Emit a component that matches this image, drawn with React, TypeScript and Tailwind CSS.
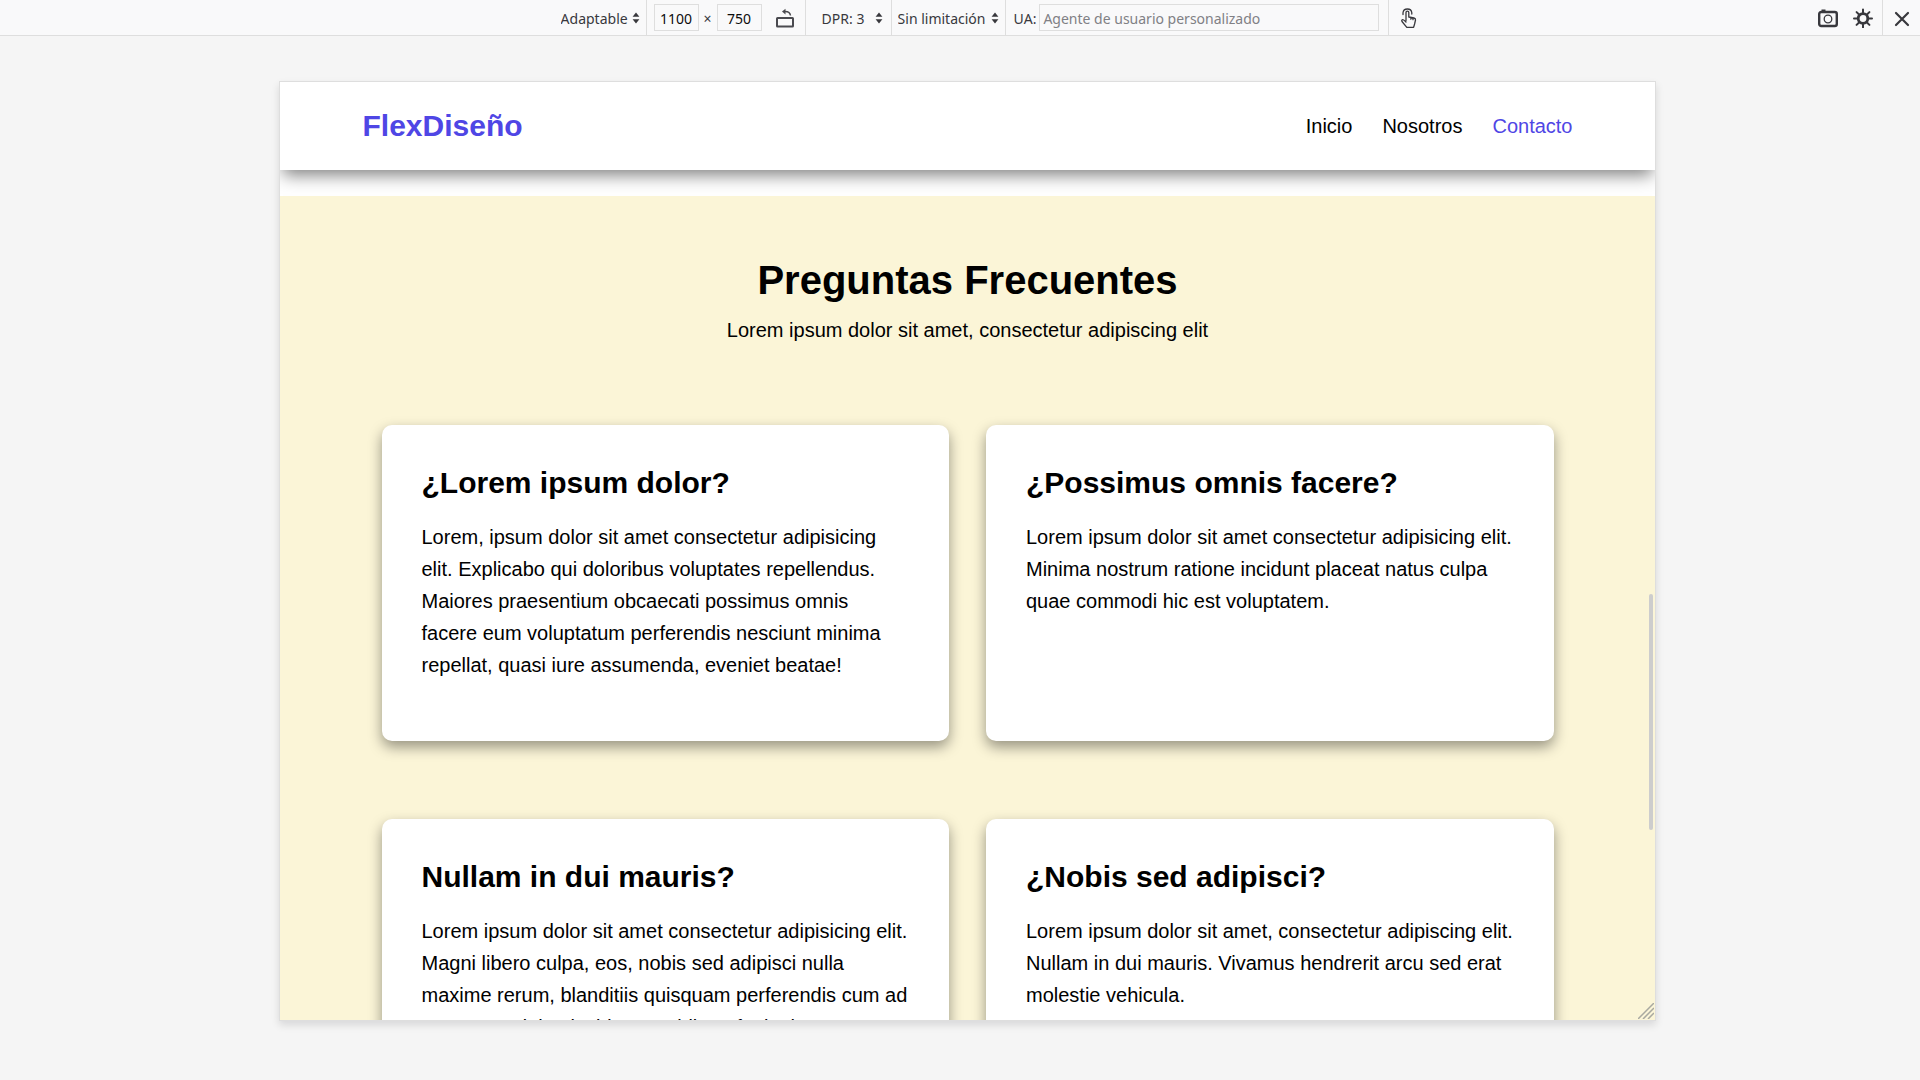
import React from "react";

function Arrows() {
  return (
    <svg viewBox="0 0 8 12" className="pointer-events-none h-3 w-2 shrink-0 fill-[#38383d]" aria-hidden="true">
      <path d="M4 0.5 7.4 4.8H0.6ZM4 11.5 7.4 7.2H0.6Z" />
    </svg>
  );
}

function Picker({ label, text, width }: { label: string; text: string; width: string }) {
  return (
    <div className="flex h-full items-center">
      <select aria-label={label} className={`appearance-none bg-transparent pt-0.5 outline-none ${width}`}>
        <option>{text}</option>
      </select>
      <Arrows />
    </div>
  );
}

function Toolbar() {
  return (
    <div
      className="grid h-9 shrink-0 grid-cols-[1fr_auto_1fr] border-b border-[#dedede] bg-[#f9f9fa] text-sm text-[#38383d]"
      style={{ fontFamily: '"Noto Sans", "Open Sans", sans-serif' }}
    >
      <div />
      <div className="flex items-center pl-[60px]">
        <div className="flex h-full items-center border-r border-[#dedede] pr-[6px]">
          <Picker label="Dispositivo" text="Adaptable" width="w-[71px]" />
        </div>
        <div className="flex h-full items-center border-r border-[#dedede] pr-[9px] pl-[7px]">
          <input aria-label="Ancho" defaultValue="1100" className="h-[27px] w-[45px] border border-[#dedede] pt-0.5 text-center text-[#0c0c0d]" />
          <span className="w-[18px] pt-0.5 text-center">×</span>
          <input aria-label="Alto" defaultValue="750" className="h-[27px] w-[45px] border border-[#dedede] pt-0.5 text-center text-[#0c0c0d]" />
          <button aria-label="Rotar" className="ml-3 flex size-[22px] items-center justify-center">
            <svg viewBox="0 0 20 20" className="size-5 fill-none stroke-[#4a4a4f]">
              <rect x="2" y="10" width="16" height="8.500" rx="0.500" strokeWidth="2" />
              <path d="M9.500 3.500q5.500-.3 6 4" strokeWidth="1.500" />
              <path d="M10.500.8v5.600L7 3.600Z" className="fill-[#4a4a4f]" stroke="none" />
            </svg>
          </button>
        </div>
        <div className="flex h-full items-center border-r border-[#dedede] pr-2 pl-4">
          <Picker label="Proporción de píxeles" text="DPR: 3" width="w-[53px]" />
        </div>
        <div className="flex h-full items-center border-r border-[#dedede] px-[6px]">
          <Picker label="Limitación de red" text="Sin limitación" width="w-[93px]" />
        </div>
        <label className="flex h-full items-center gap-[3px] border-r border-[#dedede] pr-[9px] pl-2">
          <span className="pt-0.5">UA:</span>
          <input placeholder="Agente de usuario personalizado" className="h-[27px] w-[340px] border border-[#dedede] px-[3px] pt-0.5 placeholder:text-[#808085]" />
        </label>
        <button aria-label="Simulación táctil" className="ml-2 flex size-[22px] items-center justify-center">
          <svg viewBox="0 0 20 20" className="size-5 fill-none stroke-[#38383d]" strokeWidth="1.300" strokeLinejoin="round" strokeLinecap="round">
            <path d="M8 12.500V4.600a1.400 1.400 0 0 1 2.800 0V9l5.200 1q1.700.4 1.500 2L16.600 16l-1 3.300H8.800L4 13.500q-.8-1.500.7-1.900Q5.500 11.400 8 14M12.800 9.500v1.700M15 10v1.700" />
            <path d="M5 6.500V4.800Q5.400 1 9.400 1t4.400 3.800V6" />
          </svg>
        </button>
      </div>
      <div className="flex items-center justify-end">
        <button aria-label="Capturar pantalla" className="flex w-[35px] justify-center">
          <svg viewBox="0 0 20 20" className="size-5 fill-none stroke-[#38383d]">
            <rect x="1.200" y="4" width="17.600" height="14" rx="2" strokeWidth="2.400" />
            <circle cx="10" cy="11" r="3.800" strokeWidth="1.300" />
            <path d="M3.500 2.500h4" strokeWidth="2" />
          </svg>
        </button>
        <button aria-label="Ajustes" className="flex w-9 justify-center">
          <svg viewBox="0 0 20 20" className="size-5 fill-none stroke-[#38383d]" strokeLinecap="round">
            <circle cx="10" cy="10.500" r="4.800" strokeWidth="2.800" />
            <path d="M10 1.500v3M10 16.500v3M1 10.500h3M16 10.500h3M3.600 4.100l2.200 2.200M14.200 14.700l2.200 2.200M3.600 16.900l2.200-2.200M14.200 6.300l2.200-2.200" strokeWidth="2" />
          </svg>
        </button>
        <div className="ml-px flex h-full items-center border-l border-[#dedede]">
          <button aria-label="Cerrar" className="flex w-[37px] justify-center">
            <svg viewBox="0 0 20 20" className="size-5 fill-none stroke-[#38383d]" strokeLinecap="round">
              <path d="M4 5l12 12M16 5 4 17" strokeWidth="2.200" />
            </svg>
          </button>
        </div>
      </div>
    </div>
  );
}

const faqs = [
  {
    question: "¿Lorem ipsum dolor?",
    answer:
      "Lorem, ipsum dolor sit amet consectetur adipisicing elit. Explicabo qui doloribus voluptates repellendus. Maiores praesentium obcaecati possimus omnis facere eum voluptatum perferendis nesciunt minima repellat, quasi iure assumenda, eveniet beatae!",
  },
  {
    question: "¿Possimus omnis facere?",
    answer:
      "Lorem ipsum dolor sit amet consectetur adipisicing elit. Minima nostrum ratione incidunt placeat natus culpa quae commodi hic est voluptatem.",
  },
  {
    question: "Nullam in dui mauris?",
    answer:
      "Lorem ipsum dolor sit amet consectetur adipisicing elit. Magni libero culpa, eos, nobis sed adipisci nulla maxime rerum, blanditiis quisquam perferendis cum ad numquam dolor, incidunt cupiditate fugiat harum est quasi.",
  },
  {
    question: "¿Nobis sed adipisci?",
    answer:
      "Lorem ipsum dolor sit amet, consectetur adipiscing elit. Nullam in dui mauris. Vivamus hendrerit arcu sed erat molestie vehicula.",
  },
];

function Site() {
  return (
    <div
      className="relative h-full overflow-hidden bg-white text-xl text-black"
      style={{ fontFamily: '"Liberation Sans", Arial, sans-serif' }}
    >
      <header className="flex h-[88px] items-center justify-between bg-white px-[6%] shadow-[0_8px_16px_-3px_rgba(0,0,0,0.5)]">
        <a href="#inicio" className="text-3xl font-bold text-[#4f46e5]">FlexDiseño</a>
        <nav className="flex gap-[30px]">
          <a href="#inicio">Inicio</a>
          <a href="#nosotros">Nosotros</a>
          <a href="#contacto" className="text-[#4f46e5]">Contacto</a>
        </nav>
      </header>
      <main className="relative mt-[26px] bg-[#fbf5d7] px-[6%] pt-[60px] pb-20">
        <div className="text-center">
          <h1 className="text-[40px] leading-[48px] font-bold">Preguntas Frecuentes</h1>
          <p className="mt-[10px] leading-8">Lorem ipsum dolor sit amet, consectetur adipiscing elit</p>
        </div>
        <div className="mt-[79px] grid grid-cols-2 gap-x-[37px] gap-y-[78px] px-[19px]">
          {faqs.map((f) => (
            <article key={f.question} className="rounded-[10px] bg-white px-10 pt-10 pb-[60px] shadow-[0_6px_14px_rgba(0,0,0,0.4)]">
              <h2 className="text-3xl font-bold">{f.question}</h2>
              <p className="mt-5 leading-8">{f.answer}</p>
            </article>
          ))}
        </div>
      </main>
      <div className="absolute top-[512px] right-[2px] h-[236px] w-1 rounded-full bg-[#cdcdcd]" />
      <svg viewBox="0 0 16 16" className="absolute right-px bottom-px size-4 fill-none stroke-[#a9a9a0]" strokeWidth="1.500" aria-hidden="true">
        <path d="M0 16 16 0M5 16 16 5M10 16l6-6" />
      </svg>
    </div>
  );
}

export default function App() {
  return (
    <div className="flex h-screen flex-col bg-[#f5f5f5]">
      <Toolbar />
      <div className="flex min-h-0 flex-1 justify-center pt-[45px] pr-[264px] pb-[59px] pl-[279px]">
        <div className="w-full border border-[#dedede] shadow-[0_4px_8px_rgba(12,12,13,0.12)]">
          <Site />
        </div>
      </div>
    </div>
  );
}
